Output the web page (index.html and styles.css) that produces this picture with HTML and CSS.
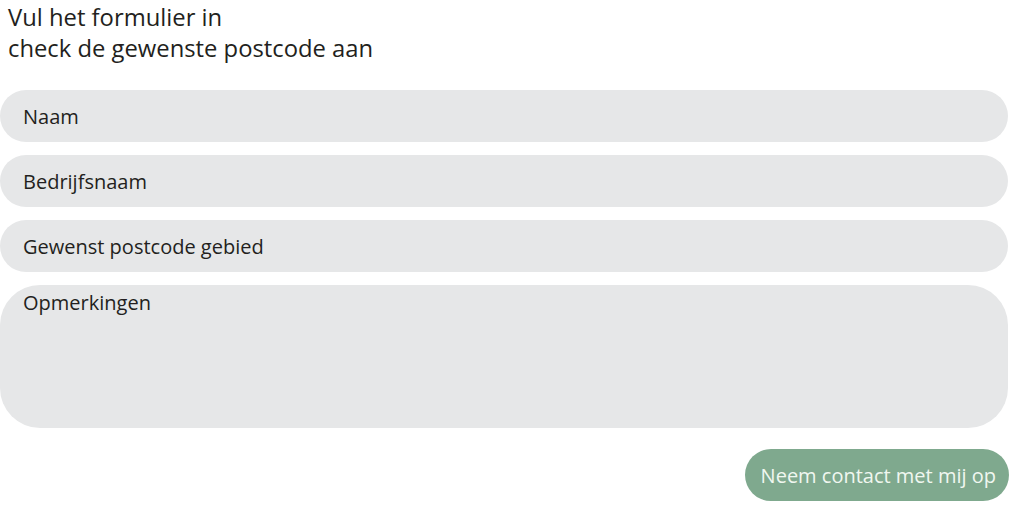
FILE: index.html
```html
<!DOCTYPE html>
<html lang="nl">
<head>
<meta charset="UTF-8">
<meta name="viewport" content="width=device-width, initial-scale=1.0">
<title>Contact</title>
<link rel="stylesheet" href="styles.css">
</head>
<body>
  <div class="intro">
    <p>Vul het formulier in<br>check de gewenste postcode aan</p>
  </div>
  <form class="contact-form">
    <input type="text" class="field" placeholder="Naam">
    <input type="text" class="field" placeholder="Bedrijfsnaam">
    <input type="text" class="field" placeholder="Gewenst postcode gebied">
    <textarea class="field remarks" placeholder="Opmerkingen"></textarea>
    <div class="actions">
      <button type="button" class="send">Neem contact met mij op</button>
    </div>
  </form>
</body>
</html>
```
FILE: styles.css
```css
body {
  margin: 0;
  padding: 0;
  background: #ffffff;
  font-family: "Open Sans", Arial, sans-serif;
  color: #231f20;
}

.intro {
  padding: 2px 9px 0 8px;
}

.intro p {
  margin: 0;
  font-size: 23.8px;
  line-height: 31px;
}

.contact-form {
  width: 1008px;
  margin-top: 26px;
  display: flex;
  flex-direction: column;
  gap: 13px;
}

.field {
  box-sizing: border-box;
  width: 100%;
  height: 52px;
  border: none;
  border-radius: 26px;
  background: #e6e7e8;
  padding: 0 23px;
  font-family: "Open Sans", Arial, sans-serif;
  font-size: 20px;
  color: #231f20;
  outline: none;
}

.field::placeholder {
  color: #231f20;
  opacity: 1;
}

.remarks {
  height: 143px;
  resize: none;
  border-radius: 40px;
  padding-top: 4px;
  line-height: 28px;
}

.actions {
  display: flex;
  justify-content: flex-end;
  margin-top: 8px;
}

.send {
  height: 52px;
  padding: 0 13px 0 16px;
  margin-right: -1px;
  border: none;
  border-radius: 26px;
  background: #7fa98e;
  color: #f0f7f0;
  font-family: "Open Sans", Arial, sans-serif;
  font-size: 20px;
  cursor: pointer;
}
```
